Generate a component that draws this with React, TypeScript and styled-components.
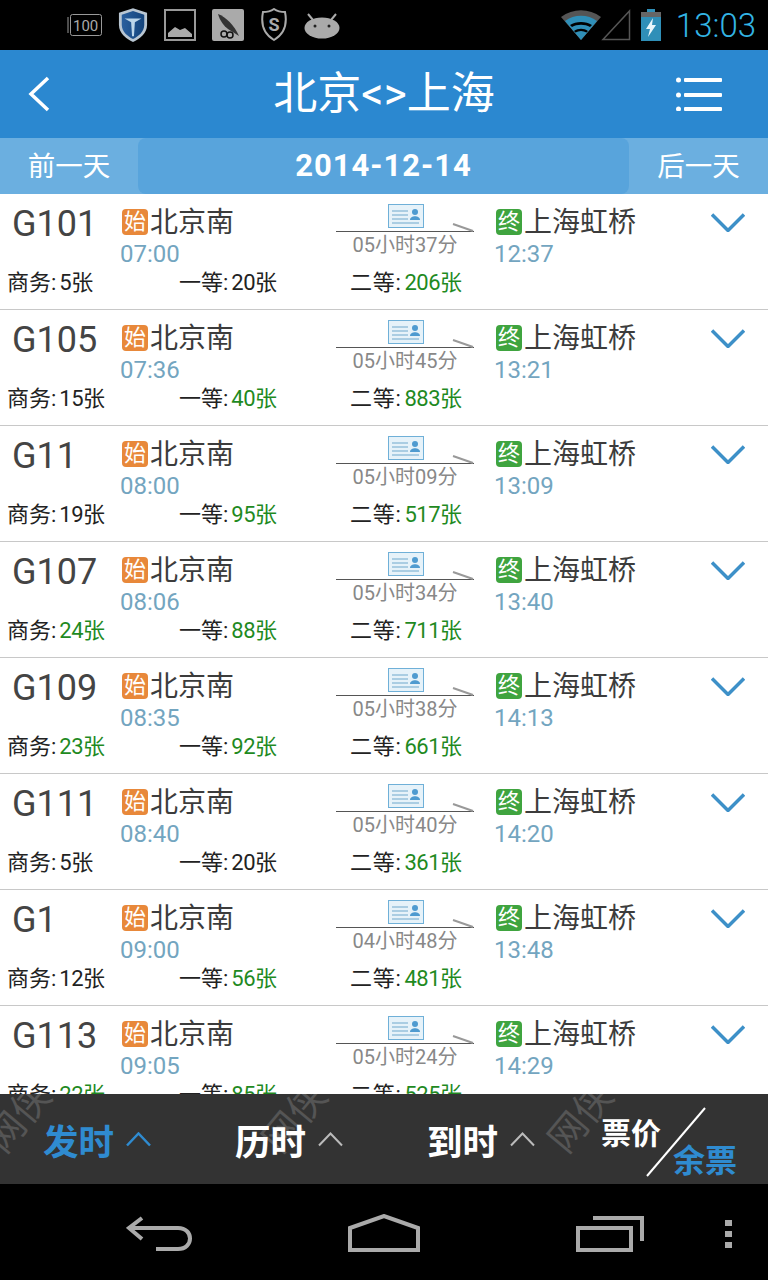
import styled, { createGlobalStyle } from "styled-components";

type Train = {
  no: string;
  depart: string;
  duration: string;
  arrive: string;
  biz: number;
  first: number;
  second: number;
};

const trains: Train[] = [
  { no: "G101", depart: "07:00", duration: "05小时37分", arrive: "12:37", biz: 5, first: 20, second: 206 },
  { no: "G105", depart: "07:36", duration: "05小时45分", arrive: "13:21", biz: 15, first: 40, second: 883 },
  { no: "G11", depart: "08:00", duration: "05小时09分", arrive: "13:09", biz: 19, first: 95, second: 517 },
  { no: "G107", depart: "08:06", duration: "05小时34分", arrive: "13:40", biz: 24, first: 88, second: 711 },
  { no: "G109", depart: "08:35", duration: "05小时38分", arrive: "14:13", biz: 23, first: 92, second: 661 },
  { no: "G111", depart: "08:40", duration: "05小时40分", arrive: "14:20", biz: 5, first: 20, second: 361 },
  { no: "G1", depart: "09:00", duration: "04小时48分", arrive: "13:48", biz: 12, first: 56, second: 481 },
  { no: "G113", depart: "09:05", duration: "05小时24分", arrive: "14:29", biz: 22, first: 85, second: 525 },
];

const GlobalStyle = createGlobalStyle`
  html, body {
    margin: 0;
    padding: 0;
    background: #000;
  }
  * {
    box-sizing: border-box;
  }
  body {
    font-family: Roboto, "Noto Sans CJK SC", sans-serif;
  }
  svg {
    display: block;
  }
`;

const Screen = styled.div`
  width: 768px;
  height: 1280px;
  display: flex;
  flex-direction: column;
  overflow: hidden;
  background: #fff;
`;

const StatusBar = styled.div`
  height: 50px;
  flex: none;
  background: #000;
  display: flex;
  align-items: center;
  padding: 0 12px 0 67px;
`;

const StatusLeft = styled.div`
  display: flex;
  align-items: center;
  gap: 16px;
  flex: 1;
`;

const StatusRight = styled.div`
  display: flex;
  align-items: center;
`;

const ChargeSlot = styled.div`
  margin-left: 10px;
`;

const Clock = styled.span`
  font-size: 33px;
  font-weight: 300;
  color: #33b5e5;
  margin-left: 15px;
`;

const Header = styled.div`
  height: 88px;
  flex: none;
  background: #2b88d0;
  display: grid;
  grid-template-columns: 1fr auto 1fr;
  align-items: center;
  padding: 0 28px;
`;

const HeaderEnd = styled.div`
  justify-self: end;
  margin-right: 18px;
`;

const Title = styled.div`
  font-size: 44px;
  color: #fff;
  line-height: 1;
  white-space: nowrap;
`;

const DateBar = styled.div`
  height: 56px;
  flex: none;
  display: grid;
  grid-template-columns: 138px 1fr 139px;
  background: #6bafe0;
`;

const DayButton = styled.div`
  display: flex;
  align-items: center;
  justify-content: center;
  color: #fff;
  font-size: 27.5px;
  padding-bottom: 5px;
`;

const DateValue = styled.div`
  display: flex;
  align-items: center;
  justify-content: center;
  background: #58a4dc;
  border-radius: 8px;
  color: #fff;
  font-size: 31px;
  font-weight: 700;
  letter-spacing: 1px;
  padding-bottom: 2px;
`;

const List = styled.div`
  flex: 1;
  min-height: 0;
  overflow: hidden;
  background: #fff;
`;

const Row = styled.div`
  height: 116px;
  border-bottom: 1px solid #c8c8c8;
  padding-top: 13px;
`;

const RowTop = styled.div`
  height: 63px;
  display: grid;
  grid-template-columns: 121px 215px 138px 21px 215px 34px;
`;

const TrainNo = styled.div`
  font-size: 36px;
  line-height: 36px;
  color: #444;
  margin-top: -1px;
  padding-left: 12px;
`;

const Station = styled.div`
  display: flex;
  flex-direction: column;
`;

const StationName = styled.div`
  display: flex;
  align-items: center;
  height: 32px;
  font-size: 28px;
  line-height: 32px;
  color: #3c3c3c;
  gap: 2px;
`;

const Badge = styled.span<{ $end?: boolean }>`
  width: 26px;
  height: 26px;
  margin-left: 1px;
  margin-top: -3px;
  border-radius: 4px;
  background: ${(p) => (p.$end ? "#3fa43f" : "#e8883a")};
  color: #fff;
  font-size: 22px;
  line-height: 25px;
  text-align: center;
`;

const Time = styled.div`
  font-size: 24px;
  line-height: 28px;
  margin: 1px 0 0 -1px;
  color: #73a5c0;
`;

const Journey = styled.div`
  display: flex;
  flex-direction: column;
  align-items: center;
  margin-top: -3px;
`;

const Duration = styled.div`
  font-size: 20px;
  line-height: 24px;
  color: #888;
`;

const ToggleIcon = styled.div`
  margin: 6px 0 0 1px;
`;

const Tickets = styled.div`
  display: grid;
  grid-template-columns: 172px 171px auto;
  padding-left: 7px;
  font-size: 22px;
  line-height: 26px;
  color: #222;

  > span:last-child {
    letter-spacing: 0.7px;
  }
`;

const Count = styled.span<{ $many: boolean }>`
  margin-left: 3px;
  letter-spacing: -0.5px;
  color: ${(p) => (p.$many ? "#1f8a1f" : "#222")};
`;

const SortBar = styled.div`
  position: relative;
  height: 90px;
  flex: none;
  background: #333;
  display: flex;
  align-items: center;
  overflow: hidden;
`;

const Watermark = styled.span<{ $left: number }>`
  position: absolute;
  left: ${(p) => p.$left}px;
  top: -6px;
  font-size: 38px;
  color: #555;
  transform: rotate(-50deg);
  white-space: nowrap;
`;

const SortItem = styled.div<{ $active?: boolean; $left: number }>`
  position: relative;
  flex: none;
  margin-left: ${(p) => p.$left}px;
  display: flex;
  align-items: center;
  gap: 12px;
  font-size: 35.5px;
  font-weight: 700;
  white-space: nowrap;
  color: ${(p) => (p.$active ? "#2f8bd0" : "#fff")};
`;

const PriceSwitch = styled.div`
  position: relative;
  flex: none;
  margin-left: 66px;
  width: 140px;
  height: 90px;
`;

const PriceLabel = styled.span`
  position: absolute;
  left: 0;
  top: 15px;
  font-size: 30px;
  font-weight: 700;
  color: #fff;
`;

const RemainLabel = styled.span`
  position: absolute;
  left: 72px;
  top: 41px;
  font-size: 32px;
  font-weight: 700;
  color: #2f8bd0;
`;

const Slash = styled.svg`
  position: absolute;
  left: 45px;
  top: 13px;
`;

const NavBar = styled.div`
  height: 96px;
  flex: none;
  background: #000;
  display: flex;
  align-items: flex-end;
  padding: 0 0 28px 126px;
`;

const NavSlot = styled.div<{ $gap?: number; $lift?: number }>`
  display: flex;
  margin-right: ${(p) => p.$gap ?? 0}px;
  margin-bottom: ${(p) => p.$lift ?? 0}px;
`;

function Chevron({ up, color, w, h, sw }: { up?: boolean; color: string; w: number; h: number; sw: number }) {
  return (
    <svg width={w} height={h} viewBox={`0 0 ${w} ${h}`} fill="none">
      <path
        d={up ? `M1 ${h - 1.5} L${w / 2} 1.5 L${w - 1} ${h - 1.5}` : `M1 1.5 L${w / 2} ${h - 1.5} L${w - 1} 1.5`}
        stroke={color}
        strokeWidth={sw}
      />
    </svg>
  );
}

function BatteryHundred() {
  return (
    <svg width="35" height="26" viewBox="0 0 35 26" fill="none">
      <path d="M1 5v16" stroke="#999" />
      <rect x="3.5" y="2.5" width="31" height="21" rx="2" stroke="#999" />
      <text x="6" y="19" fontFamily="Roboto" fontSize="15" fill="#aaa">100</text>
    </svg>
  );
}

function ShieldIcon() {
  return (
    <svg width="30" height="34" viewBox="0 0 32 36">
      <defs>
        <linearGradient id="shieldFill" x1="0" y1="0" x2="1" y2="0">
          <stop offset="0" stopColor="#2a5f9e" />
          <stop offset="1" stopColor="#14447c" />
        </linearGradient>
      </defs>
      <path d="M16 0 L31 5 V18 C31 27 23 33 16 36 C9 33 1 27 1 18 V5Z" fill="#b9c6d2" />
      <path d="M16 3 L28 7 V18 C28 25 22 30 16 33 C10 30 4 25 4 18 V7Z" fill="url(#shieldFill)" />
      <path d="M7 11 H25 L18 15 L17 30 H15 L14 15Z" fill="#bcd6ea" />
    </svg>
  );
}

function PictureIcon() {
  return (
    <svg width="32" height="32" viewBox="0 0 32 32" fill="none">
      <rect x="1" y="1" width="30" height="30" stroke="#999" strokeWidth="2" />
      <path d="M4 28 V24 L11 18 L16 21 L21 19 L28 25 V28Z" fill="#aaa" />
    </svg>
  );
}

function ToolIcon() {
  return (
    <svg width="32" height="32" viewBox="0 0 32 32">
      <rect width="32" height="32" rx="2" fill="#aaa" />
      <path d="M6 5 C14 8 22 16 27 27 L16 20 C12 17 8 12 6 5Z" fill="#333" />
      <circle cx="12" cy="25" r="3" fill="none" stroke="#111" strokeWidth="1.5" />
      <circle cx="18" cy="26" r="3" fill="none" stroke="#111" strokeWidth="1.5" />
    </svg>
  );
}

function BadgeIcon() {
  return (
    <svg width="28" height="34" viewBox="0 0 28 34" fill="none">
      <path d="M3 4 C8 4 11 3 14 1 C17 3 20 4 25 4 C27 14 26 25 14 32 C2 25 1 14 3 4Z" stroke="#aaa" strokeWidth="2" />
      <text x="14" y="23" textAnchor="middle" fontFamily="Roboto" fontWeight="700" fontSize="18" fill="#aaa">S</text>
    </svg>
  );
}

function RobotIcon() {
  return (
    <svg width="36" height="28" viewBox="0 0 36 28">
      <path d="M4 3 L9 9 M32 3 L27 9" stroke="#aaa" strokeWidth="2" />
      <ellipse cx="18" cy="17" rx="17.5" ry="10.5" fill="#aaa" />
      <circle cx="11" cy="15" r="1.5" fill="#222" />
      <circle cx="25" cy="15" r="1.5" fill="#222" />
    </svg>
  );
}

function WifiIcon() {
  return (
    <svg width="40" height="30" viewBox="0 0 40 30">
      <path d="M0 7 C12 -2 28 -2 40 7 L20 30Z" fill="#555" />
      <path d="M4 11 C13 4 27 4 36 11 L20 30Z" fill="#2f8fb8" />
      <path d="M9 15 C15 11 25 11 31 15 L29 17 C24 14 16 14 11 17Z" fill="#000" />
      <path d="M13 21 C17 18 23 18 27 21 L25.5 22.5 C22 20.5 18 20.5 14.5 22.5Z" fill="#000" />
    </svg>
  );
}

function SignalIcon() {
  return (
    <svg width="30" height="32" viewBox="0 0 30 32" fill="none">
      <path d="M28.5 2 V30.5 H2Z" stroke="#555" strokeWidth="1.5" />
    </svg>
  );
}

function ChargeIcon() {
  return (
    <svg width="20" height="32" viewBox="0 0 20 32">
      <rect x="6" y="0" width="8" height="3" fill="#2f8fb8" />
      <rect x="0" y="3" width="20" height="29" fill="#2f8fb8" />
      <rect x="0" y="3" width="20" height="5" fill="#666" />
      <path d="M12 9 L5 20 H9 L7 28 L15 16 H11Z" fill="#e8f6fb" />
    </svg>
  );
}

function BackArrow() {
  return (
    <svg width="22" height="36" viewBox="0 0 22 36" fill="none">
      <path d="M20 2 L3 18 L20 34" stroke="#fff" strokeWidth="3.5" />
    </svg>
  );
}

function MenuIcon() {
  return (
    <svg width="46" height="34" viewBox="0 0 46 34" fill="#fff">
      <circle cx="2.5" cy="3" r="2.5" />
      <circle cx="2.5" cy="18" r="2.5" />
      <circle cx="2.5" cy="32" r="2.5" />
      <rect x="8" y="1" width="38" height="4" rx="1" />
      <rect x="8" y="16" width="38" height="4" rx="1" />
      <rect x="8" y="30" width="38" height="4" rx="1" />
    </svg>
  );
}

function SeatCard() {
  return (
    <svg width="138" height="29" viewBox="0 0 138 29" fill="none">
      <rect x="52.5" y="0.5" width="35" height="23" fill="#e6f2f9" stroke="#6fb0d8" />
      <path d="M56 7 H72 M56 11 H72 M56 15 H72 M56 19 H83" stroke="#6fa8cc" />
      <circle cx="79" cy="8" r="3" fill="#4f9bd0" />
      <path d="M74 16 C74 11 84 11 84 16Z" fill="#4f9bd0" />
      <path d="M0 27.5 H138" stroke="#555" />
      <path d="M117 20 L137 27" stroke="#999" strokeWidth="2" />
    </svg>
  );
}

function BackKey() {
  return (
    <svg width="66" height="36" viewBox="0 0 66 36" fill="none">
      <path d="M16 2 L3 12 L16 23 M3 12 H52 C68 12 68 33 52 33 H30" stroke="#aaa" strokeWidth="4" />
    </svg>
  );
}

function HomeKey() {
  return (
    <svg width="72" height="38" viewBox="0 0 72 38" fill="none">
      <path d="M2 36 V14 L36 2 L70 14 V36Z" stroke="#aaa" strokeWidth="4" />
    </svg>
  );
}

function RecentKey() {
  return (
    <svg width="68" height="36" viewBox="0 0 68 36" fill="none">
      <rect x="2" y="12" width="53" height="22" stroke="#aaa" strokeWidth="4" />
      <path d="M17 2 H66 V25" stroke="#aaa" strokeWidth="4" />
    </svg>
  );
}

function MoreKey() {
  return (
    <svg width="7" height="29" viewBox="0 0 7 29" fill="#aaa">
      <rect width="7" height="6" />
      <rect y="11" width="7" height="6" />
      <rect y="22" width="7" height="6" />
    </svg>
  );
}

function TrainRow({ train }: { train: Train }) {
  return (
    <Row>
      <RowTop>
        <TrainNo>{train.no}</TrainNo>
        <Station>
          <StationName>
            <Badge>始</Badge>北京南
          </StationName>
          <Time>{train.depart}</Time>
        </Station>
        <Journey>
          <SeatCard />
          <Duration>{train.duration}</Duration>
        </Journey>
        <div />
        <Station>
          <StationName>
            <Badge $end>终</Badge>上海虹桥
          </StationName>
          <Time>{train.arrive}</Time>
        </Station>
        <ToggleIcon>
          <Chevron color="#3d90c8" w={34} h={19} sw={3.5} />
        </ToggleIcon>
      </RowTop>
      <Tickets>
        <span>
          商务:<Count $many={train.biz > 20}>{train.biz}张</Count>
        </span>
        <span>
          一等:<Count $many={train.first > 20}>{train.first}张</Count>
        </span>
        <span>
          二等:<Count $many={train.second > 20}>{train.second}张</Count>
        </span>
      </Tickets>
    </Row>
  );
}

export default function App() {
  return (
    <Screen>
      <GlobalStyle />
      <StatusBar>
        <StatusLeft>
          <BatteryHundred />
          <ShieldIcon />
          <PictureIcon />
          <ToolIcon />
          <BadgeIcon />
          <RobotIcon />
        </StatusLeft>
        <StatusRight>
          <WifiIcon />
          <SignalIcon />
          <ChargeSlot>
            <ChargeIcon />
          </ChargeSlot>
          <Clock>13:03</Clock>
        </StatusRight>
      </StatusBar>
      <Header>
        <BackArrow />
        <Title>北京&lt;&gt;上海</Title>
        <HeaderEnd>
          <MenuIcon />
        </HeaderEnd>
      </Header>
      <DateBar>
        <DayButton>前一天</DayButton>
        <DateValue>2014-12-14</DateValue>
        <DayButton>后一天</DayButton>
      </DateBar>
      <List>
        {trains.map((t) => (
          <TrainRow key={t.no} train={t} />
        ))}
      </List>
      <SortBar>
        <Watermark $left={-22}>网侠</Watermark>
        <Watermark $left={254}>网侠</Watermark>
        <Watermark $left={540}>网侠</Watermark>
        <SortItem $active $left={43}>
          发时
          <Chevron up color="#2f8bd0" w={25} h={15} sw={2.5} />
        </SortItem>
        <SortItem $left={84}>
          历时
          <Chevron up color="#bbb" w={25} h={15} sw={2} />
        </SortItem>
        <SortItem $left={84}>
          到时
          <Chevron up color="#bbb" w={25} h={15} sw={2} />
        </SortItem>
        <PriceSwitch>
          <PriceLabel>票价</PriceLabel>
          <Slash width="60" height="70" viewBox="0 0 60 70">
            <path d="M1 69 L59 1" stroke="#fff" strokeWidth="2" />
          </Slash>
          <RemainLabel>余票</RemainLabel>
        </PriceSwitch>
      </SortBar>
      <NavBar>
        <NavSlot $gap={156}>
          <BackKey />
        </NavSlot>
        <NavSlot $gap={156}>
          <HomeKey />
        </NavSlot>
        <NavSlot $gap={81}>
          <RecentKey />
        </NavSlot>
        <NavSlot $lift={3}>
          <MoreKey />
        </NavSlot>
      </NavBar>
    </Screen>
  );
}
